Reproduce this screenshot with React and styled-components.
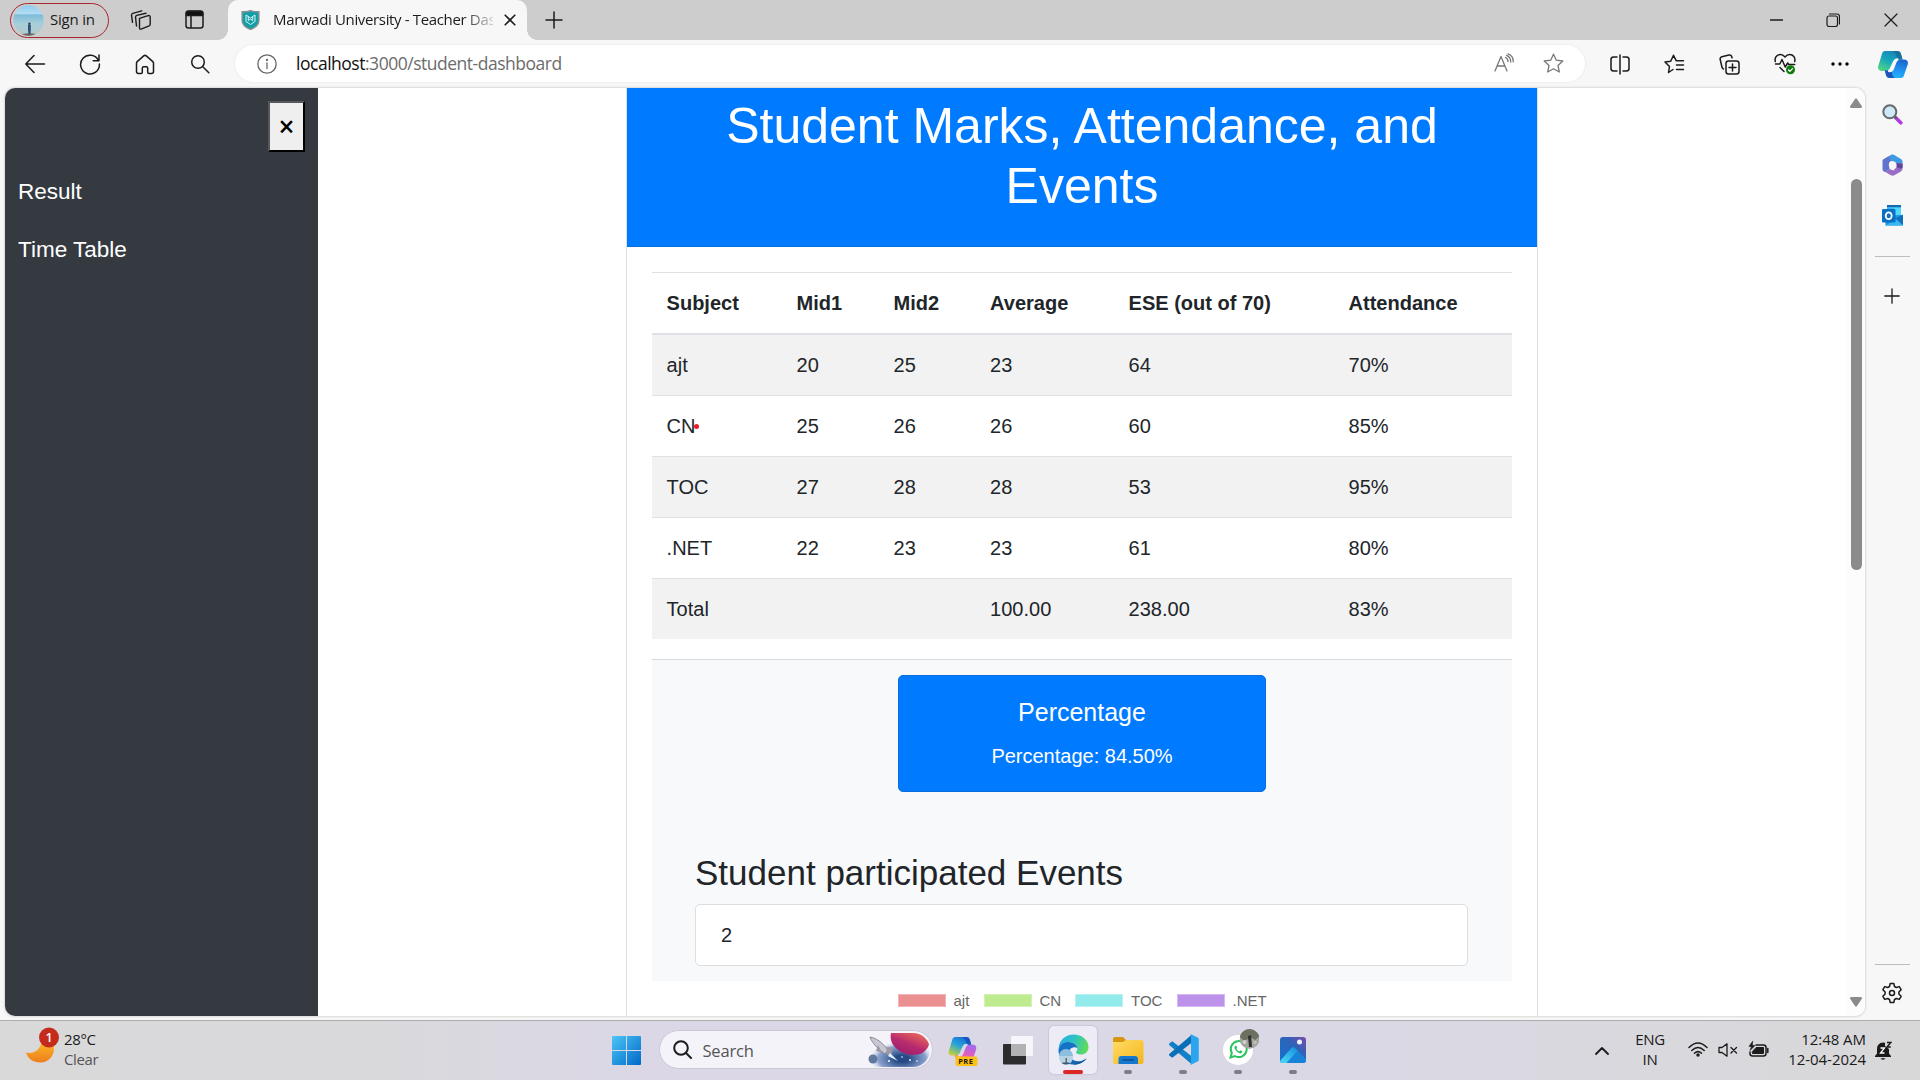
import React from "react";
import styled, { createGlobalStyle } from "styled-components";

const UI = `"Open Sans", "Noto Sans", sans-serif`;
const ARIAL = `"Liberation Sans", Arial, sans-serif`;

const Global = createGlobalStyle`
  *, *::before, *::after { box-sizing: border-box; }
  html, body { margin: 0; padding: 0; background: #f7f7f7; overflow: hidden; }
  h1, h2, h5, p { margin: 0; font-weight: 400; }
`;

const Desktop = styled.div`
  width: 1920px;
  height: 1080px;
  display: flex;
  flex-direction: column;
  background: #f7f7f7;
  font-family: ${UI};
  color: #1b1b1b;
  overflow: hidden;
  svg { display: block; flex: none; }
`;

/* ---------- Title bar ---------- */
const TitleBar = styled.div`
  height: 40px;
  flex: none;
  display: flex;
  background: #cdcdcd;
`;
const Profile = styled.div`
  width: 99px;
  height: 35px;
  margin: 3px 0 0 10px;
  padding-left: 2px;
  display: flex;
  align-items: center;
  gap: 6px;
  border: 1.5px solid #a8262f;
  border-radius: 18px;
  font-size: 15px;
  letter-spacing: -0.2px;
  white-space: nowrap;
`;
const ProfileName = styled.span`
  padding-bottom: 3px;
`;
const Slot = styled.div`
  width: ${(p) => p.$w || 55}px;
  height: 100%;
  flex: none;
  display: flex;
  align-items: center;
  justify-content: center;
`;
const TitleSlots = styled.div`
  display: flex;
  width: 108px;
  padding-left: 5px;
  height: 39px;
`;
const Tab = styled.div`
  width: 299px;
  height: 40px;
  margin-left: 11px;
  padding: 0 13px 0 13px;
  display: flex;
  align-items: center;
  position: relative;
  background: #f7f7f7;
  border-radius: 10px 10px 0 0;
  &::before, &::after {
    content: "";
    position: absolute;
    bottom: 0;
    width: 10px;
    height: 10px;
  }
  &::before { left: -10px; background: radial-gradient(circle at 0 0, transparent 9.5px, #f7f7f7 10px); }
  &::after { right: -10px; background: radial-gradient(circle at 100% 0, transparent 9.5px, #f7f7f7 10px); }
`;
const TabTitle = styled.div`
  width: 220px;
  margin: 0 11px 2px 13px;
  white-space: nowrap;
  font-size: 15px;
  letter-spacing: -0.35px;
  mask-image: linear-gradient(90deg, #000 190px, transparent 226px);
`;
const WindowButtons = styled.div`
  margin-left: auto;
  display: flex;
  height: 39px;
`;

/* ---------- Address row ---------- */
const Toolbar = styled.div`
  height: 48px;
  flex: none;
  display: flex;
  padding-left: 7.5px;
`;
const AddressBar = styled.div`
  width: 1350px;
  height: 37px;
  margin: 5px 7px 0 7.5px;
  padding: 0 21px 0 22px;
  display: flex;
  align-items: center;
  border-radius: 19px;
  background: #fff;
  box-shadow: 0 0 3px rgba(0, 0, 0, 0.08);
`;
const Url = styled.div`
  flex: 1;
  margin-left: 19px;
  padding-bottom: 1px;
  font-size: 17.5px;
  letter-spacing: -0.48px;
  color: #6c6c6c;
  b { font-weight: 400; color: #111; }
`;
const AddressTools = styled.div`
  display: flex;
  gap: 29px;
`;

/* ---------- Page area ---------- */
const Body = styled.div`
  height: 932px;
  flex: none;
  display: flex;
  padding-left: 5px;
`;
const Viewport = styled.div`
  width: 1860px;
  height: 928px;
  display: flex;
  background: #fff;
  border-radius: 10px;
  overflow: hidden;
  box-shadow: 0 0 2px 1px rgba(0, 0, 0, 0.12);
  font-family: ${ARIAL};
  color: #212529;
`;
const SideMenu = styled.div`
  width: 313px;
  background: #343a40;
  color: #fff;
  padding: 13px 13px 0;
  display: flex;
  flex-direction: column;
`;
const CloseButton = styled.button`
  align-self: flex-end;
  width: 37px;
  height: 51px;
  padding: 0 0 2px;
  border: 2px solid;
  border-color: #55585c #000 #000 #55585c;
  background: #efefef;
  color: #000;
  font: 600 28px/1 ${UI};
`;
const MenuLink = styled.div`
  height: 58px;
  display: flex;
  align-items: center;
  font-size: 22.5px;
`;
const Menu = styled.div`
  padding-top: 11px;
`;
const PageMain = styled.div`
  flex: 1;
  padding-left: 308px;
`;
const Card = styled.div`
  width: 912px;
  height: 940px;
  border: 1px solid #dfdfdf;
  border-top: 0;
`;
const CardHeader = styled.div`
  height: 159px;
  padding-top: 8px;
  background: #007bff;
  border-bottom: 1px solid #066fe0;
  color: #fff;
  text-align: center;
`;
const CardTitle = styled.h1`
  padding: 0 60px;
  font-size: 50px;
  line-height: 60px;
`;
const CardBody = styled.div`
  padding: 25px 25px 0;
`;
const Table = styled.div`
  height: 387px;
`;
const Row = styled.div`
  display: grid;
  grid-template-columns: 130px 97px 96.5px 138.5px 220px 178px;
  height: ${(p) => (p.$head ? 63 : 61)}px;
  border-top: 1px solid #dee2e6;
  ${(p) => p.$head && `border-bottom: 2px solid #dee2e6; font-weight: 700;`}
  ${(p) => p.$first && `border-top: 0; height: 60px;`}
  background: ${(p) => (p.$striped ? "#f2f2f2" : "#fff")};
  line-height: 30px;
  font-size: 20px;
`;
const Cell = styled.div`
  padding: 15px 0 0 14.6px;
  position: relative;
`;
const Pointer = styled.i`
  position: absolute;
  left: 42px;
  top: 28px;
  width: 5px;
  height: 5px;
  border-radius: 50%;
  background: #ec1c24;
`;
const Summary = styled.div`
  height: 322px;
  padding: 15px 43px 0;
  background: #f8f9fa;
  border-top: 1px solid #d6d8db;
`;
const PercentCard = styled.div`
  width: 368px;
  height: 117px;
  margin: 0 auto;
  padding-top: 21px;
  background: #007bff;
  border: 1px solid #0a6fdc;
  border-radius: 5px;
  color: #fff;
  text-align: center;
`;
const PercentTitle = styled.h5`
  font-size: 25px;
  line-height: 30px;
`;
const PercentText = styled.p`
  margin-top: 14px;
  font-size: 20px;
  line-height: 30px;
`;
const EventsTitle = styled.h2`
  margin-top: 60px;
  font-size: 35px;
  line-height: 42px;
`;
const EventsBox = styled.div`
  width: 773px;
  height: 62px;
  margin-top: 10px;
  padding: 15px 25px;
  background: #fff;
  border: 1px solid #dcdee0;
  border-radius: 5px;
  font-size: 20px;
  line-height: 30px;
`;
const Legend = styled.div`
  display: flex;
  padding: 12px 0 0 245.5px;
`;
const LegendItem = styled.div`
  width: ${(p) => p.$w}px;
  display: flex;
  align-items: center;
  gap: 8px;
  font-size: 15px;
  line-height: 15px;
  color: #666;
`;
const Swatch = styled.i`
  width: 48px;
  height: 13px;
  background: ${(p) => p.$c};
  border: 1px solid ${(p) => p.$b};
`;
const Scrollbar = styled.div`
  width: 19px;
  padding: 10px 3.5px 9px 0;
  display: flex;
  flex-direction: column;
  align-items: flex-end;
  background: #fcfcfc;
`;
const Thumb = styled.div`
  width: 11px;
  height: 391px;
  margin: 71px 0 auto;
  border-radius: 6px;
  background: #8b8b8b;
`;
const EdgeSidebar = styled.div`
  width: 54px;
  display: flex;
  flex-direction: column;
  align-items: center;
`;
const SideSlot = styled.div`
  height: ${(p) => p.$h || 51}px;
  display: flex;
  align-items: center;
`;
const Divider = styled.div`
  width: 35px;
  height: 1px;
  background: #bdbdbd;
  margin: ${(p) => p.$m};
`;

/* ---------- Taskbar ---------- */
const Taskbar = styled.div`
  height: 60px;
  flex: none;
  display: flex;
  border-top: 1px solid #adadb0;
  background: linear-gradient(90deg, #d9d9da 0, #d9d9dc 20%, #dbd7e6 34%, #dbd8e6 68%, #d9d8de 84%, #d8d8d9 100%);
`;
const Weather = styled.div`
  width: 598.5px;
  display: flex;
  padding-left: 24px;
`;
const Lines = styled.div`
  width: ${(p) => p.$w || "auto"};
  padding-top: 8px;
  text-align: ${(p) => p.$a || "left"};
  font-size: 15px;
  line-height: 20px;
  letter-spacing: ${(p) => p.$ls || -0.35}px;
  white-space: nowrap;
  span { color: #555; }
`;
const SearchBox = styled.div`
  width: 274px;
  height: 39px;
  margin: 9px 3px 0 5px;
  padding: 0 2px 0 13px;
  display: flex;
  align-items: center;
  background: #f4f3fa;
  border: 1px solid #cbc8d6;
  border-radius: 20px;
  font-size: 16.5px;
  letter-spacing: -0.2px;
  color: #555;
`;
const SearchLabel = styled.span`
  flex: 1;
  margin-left: 11px;
  padding-top: 1px;
`;
const AppSlot = styled.div`
  width: 55px;
  display: flex;
  flex-direction: column;
  align-items: center;
`;
const AppTile = styled.div`
  width: 48px;
  height: 48px;
  margin-top: 5px;
  display: flex;
  flex-direction: column;
  align-items: center;
  border-radius: 5px;
  ${(p) => p.$active && `background: #edebf5; box-shadow: 0 0 1px 1px rgba(120,110,150,.15);`}
`;
const AppIcon = styled.div`
  margin-top: ${(p) => p.$top}px;
  height: 26px;
`;
const Mark = styled.i`
  width: ${(p) => (p.$active ? 20 : 8)}px;
  height: 4px;
  margin-top: auto;
  border-radius: 2px;
  background: ${(p) => (p.$active ? "#dc2626" : "#7f7c88")};
`;
const Tray = styled.div`
  margin-left: auto;
  display: flex;
  padding-right: 20px;
`;
const TrayIcons = styled.div`
  display: flex;
  align-items: center;
  gap: 10px;
  width: 81px;
  margin-left: 4px;
  padding-bottom: 2px;
`;

const Line = ({ w = 22, h = w, vb, sw = 1.5, c = "#1b1b1b", children }) => (
  <svg width={w} height={h} viewBox={vb || `0 0 ${w} ${h}`} fill="none" stroke={c} strokeWidth={sw} strokeLinecap="round" strokeLinejoin="round">
    {children}
  </svg>
);

const Avatar = () => (
  <svg width="31" height="31" viewBox="0 0 31 31">
    <defs>
      <linearGradient id="sky" x1="0" y1="0" x2="0" y2="1">
        <stop offset="0" stopColor="#8ccbf0" /><stop offset=".28" stopColor="#b3dcf2" />
        <stop offset=".32" stopColor="#7fbbd9" /><stop offset=".6" stopColor="#a6cfdb" /><stop offset="1" stopColor="#b9c9c5" />
      </linearGradient>
      <clipPath id="avc"><circle cx="15.5" cy="15.5" r="15.2" /></clipPath>
    </defs>
    <g clipPath="url(#avc)">
      <rect width="31" height="31" fill="url(#sky)" />
      <path d="M5 31l4-2 7-.8 8 .8 3 2z" fill="#6b655e" />
      <path d="M15 20h2.800v4l-.3 5h-2.100l-.4-5z" fill="#2f4f7c" /><circle cx="16.400" cy="18.700" r="1.200" fill="#3b3a3f" />
    </g>
  </svg>
);

const Shield = () => (
  <svg width="19" height="20" viewBox="0 0 19 20">
    <path d="M9.5.6c2 1 5.400 1.300 8.400 1.100v8.800c0 4.200-3.600 7.100-8.400 9-4.800-1.900-8.400-4.800-8.400-9V1.700c3 .2 6.400-.1 8.400-1.100z" fill="#109fa6" stroke="#8b8f91" strokeWidth="1.4" />
    <path d="M5 5v6.500l4.500 3 4.500-3V5L9.500 8zM7.300 6.500v4M11.700 6.500v4M7.300 10.500l2.200-1.300 2.200 1.300" fill="none" stroke="#d9f2f2" strokeWidth="1" />
  </svg>
);

const CopilotMark = ({ w = 30, h = 27, taskbar }) => (
  <svg width={w} height={h} viewBox="0 0 30 27">
    <defs>
      <linearGradient id={taskbar ? "ca2" : "ca"} x1=".8" y1="0" x2=".2" y2="1">
        <stop offset="0" stopColor={taskbar ? "#1768d6" : "#1b7fb5"} /><stop offset=".5" stopColor={taskbar ? "#26a5d8" : "#14a5bd"} /><stop offset="1" stopColor={taskbar ? "#c5d03a" : "#4fd683"} />
      </linearGradient>
      <linearGradient id={taskbar ? "cb2" : "cb"} x1=".6" y1="0" x2=".3" y2="1">
        <stop offset="0" stopColor={taskbar ? "#a667ee" : "#1b66cf"} /><stop offset=".6" stopColor={taskbar ? "#e65eb8" : "#2099f4"} /><stop offset="1" stopColor={taskbar ? "#fa8b6a" : "#24b7f8"} />
      </linearGradient>
    </defs>
    <path d="M7 0h12c2.400 0 3.500 1.300 4 3l1.500 5.500h-5.500c-2 0-3 1.400-3.500 3l-2.200 6c-.6 1.700-1.500 2.500-3.300 2.500H4c-3 0-4.600-2-3.700-5L4 2.700C4.500 1 5.400 0 7 0z" fill={`url(#${taskbar ? "ca2" : "ca"})`} />
    <path d="M23 27H12c-2.400 0-3.500-1.200-4-3l-1.200-4.500h4.400c2 0 2.800-1 3.300-2.500l2.300-6c.6-1.700 1.500-2.500 3.300-2.500H26c3 0 4.600 2 3.700 5L26 24.300c-.5 1.700-1.400 2.700-3 2.700z" fill={`url(#${taskbar ? "cb2" : "cb"})`} />
    <path d="M14.500.1H19c2.400 0 3.500 1.300 4 3l1.500 5.400H20c-2-5-3-7.500-5.500-8.400z" fill={taskbar ? "#174fb8" : "#146a94"} opacity=".75" />
    <path d="M6.800 19.600h4.400c1 0 1.800-.3 2.300-.9.300 4 1.200 7.300 3.500 8.300h-5c-2.400 0-3.500-1.200-4-3z" fill={taskbar ? "#f4b42b" : "#1b3fa8"} opacity=".8" />
    <path d="M16.300 10.500q1-2 3-2l-1.600 1.500-3.300 8.500q-.8 1.600-3.200 1.500l1.500-1.500z" fill={taskbar ? "#dbd8e6" : "#f7f7f7"} stroke={taskbar ? "#dbd8e6" : "#f7f7f7"} strokeWidth="2.500" strokeLinejoin="round" />
  </svg>
);

const SearchColor = () => (
  <svg width="21" height="21" viewBox="0 0 21 21">
    <path d="M14 14l4.800 4.800" stroke="#b13ae0" strokeWidth="3.600" strokeLinecap="round" />
    <path d="M12 12l2.500 2.500" stroke="#55585d" strokeWidth="2" />
    <circle cx="7.800" cy="7.800" r="6.500" fill="#cfe8f8" stroke="#65696e" strokeWidth="2" />
  </svg>
);
const M365 = () => (
  <svg width="21" height="22" viewBox="0 0 21 22">
    <path d="M10 .5c-3 1.500-6 3-8.300 4.600C.8 5.800.5 6.500.5 7.600v7.500c0 2 1.600 3.400 3.500 2.500L7.500 15V8L14 4.300z" fill="#5f74cf" />
    <path d="M9.500.7c1-.4 1.900-.2 2.800.3l6.600 3.900c1 .6 1.600 1.500 1.600 2.700v5.600L14 9.500 8.500 6.500c-.8-2-1-5 1-5.800z" fill="#3d9be3" />
    <path d="M20.500 9v5.800c0 1.200-.6 2-1.600 2.600l-6.600 3.900c-1 .6-2.400.6-3.400 0L3 17.800l4.500-2.900 4 1.600 3-3.500V9z" fill="#9a6dc4" />
    <path d="M20.500 10v3.800c-2 1.600-4.500.5-6-1.300V9z" fill="#5e4797" />
    <circle cx="10.600" cy="11" r="3.800" fill="#f7f7f7" />
  </svg>
);
const Outlook = () => (
  <svg width="21" height="21" viewBox="0 0 21 21">
    <path d="M5 0h14v12H5z" fill="#35b8f1" /><path d="M5 0h14v2H5z" fill="#1769aa" /><path d="M12 3h7v7h-7z" fill="#50d9ff" />
    <path d="M3.500 11L21 10v10.500H3.500z" fill="#1b93dd" /><path d="M21 9.500V20l-8-6z" fill="#0f6fbb" /><path d="M3.500 20.500L14 14l7 6.500z" fill="#39b7f0" />
    <rect y="4" width="13.500" height="13.500" rx="1.300" fill="#0b6fc6" />
    <ellipse cx="6.700" cy="10.700" rx="3" ry="3.400" fill="none" stroke="#fff" strokeWidth="1.800" />
  </svg>
);

const WinLogo = () => (
  <svg width="29" height="29" viewBox="0 0 29 29">
    <defs><linearGradient id="wl" x1="0" y1="0" x2="1" y2="1"><stop offset="0" stopColor="#4cc6f7" /><stop offset="1" stopColor="#0068c8" /></linearGradient></defs>
    <path d="M1 0h13v14H0V1q0-1 1-1zM15 0h13q1 0 1 1v13H15zM0 15h14v14H1q-1 0-1-1zM15 15h14v13q0 1-1 1H15z" fill="url(#wl)" />
  </svg>
);
const SearchArt = () => (
  <svg width="63" height="34" viewBox="0 0 63 34">
    <defs>
      <radialGradient id="sp" cx=".5" cy=".55" r=".5"><stop offset=".2" stopColor="#254a86" /><stop offset=".7" stopColor="#6d8bc0" stopOpacity=".8" /><stop offset="1" stopColor="#f4f3fa" stopOpacity="0" /></radialGradient>
      <linearGradient id="pl" x1=".1" y1="1" x2=".8" y2="0"><stop offset="0" stopColor="#8f1f6d" /><stop offset=".5" stopColor="#b82a6e" /><stop offset="1" stopColor="#ee6b57" /></linearGradient>
      <clipPath id="ac"><path d="M0 0h46a17 17 0 010 34H0z" /></clipPath>
    </defs>
    <g clipPath="url(#ac)">
      <ellipse cx="35" cy="24" rx="34" ry="18" fill="url(#sp)" />
      <path d="M24 0h36c5 8 2 19-9 21.500C37 24 21 14 24 0z" fill="url(#pl)" />
      <circle cx="6" cy="26" r="4.500" fill="#60799c" />
      <path d="M3 4c6 1 12 5 18 13l-3 4C11 16 5 10 3 4z" fill="#c9c8d2" stroke="#777789" strokeWidth=".8" />
      <path d="M11 12l-2 6 6 1.500zM20 14l6 1-2 8-5-2z" fill="#9b97a6" />
      <path d="M23 20l8 8-10-5z" fill="#dff2ff" />
      <g fill="#fff"><circle cx="35" cy="24" r=".8" /><circle cx="43" cy="27" r=".9" /><circle cx="50" cy="28" r=".8" /><circle cx="22" cy="28" r="1" /></g>
    </g>
  </svg>
);
const PreText = styled.text`
  font: 700 7.5px ${UI};
  letter-spacing: 0.4px;
`;
const CopilotPre = () => (
  <svg width="30" height="30" viewBox="0 0 30 30">
    <CopilotMark w={29} h={25} taskbar />
    <rect x="7.500" y="19.500" width="22" height="9.500" rx="2" fill="#fbc116" />
    <PreText x="10.200" y="27" fill="#1d1a10">PRE</PreText>
  </svg>
);
const TaskView = () => (
  <svg width="30" height="29" viewBox="0 0 30 29">
    <rect y="8" width="23" height="20.500" rx="1" fill="#2c2c2e" />
    <rect x="8" width="22" height="20" rx="1" fill="#f6f5f9" />
    <path d="M8 8h15v12H8z" fill="#b2b2b4" />
  </svg>
);
const Edge = () => (
  <svg width="31" height="31" viewBox="0 0 31 31">
    <defs>
      <linearGradient id="e1" x1="0" y1=".3" x2="1" y2=".5"><stop offset="0" stopColor="#2baee4" /><stop offset=".5" stopColor="#2cc3c3" /><stop offset="1" stopColor="#62dc55" /></linearGradient>
      <linearGradient id="e2" x1="0" y1="0" x2="1" y2="1"><stop offset="0" stopColor="#1e8fdc" /><stop offset="1" stopColor="#114a8b" /></linearGradient>
    </defs>
    <path d="M.6 14C1.500 6 7.500.5 15.500.5 24 .5 30.500 6 30.500 13c0 5-3.600 7.500-7.700 7.500-3 0-4.800-1.200-4.800-2.200 0-.8 1.400-1.400 1.400-3.600C19.400 11 15.500 8 11 8 6.500 8 2.500 10.500.6 14z" fill="url(#e1)" />
    <path d="M.5 15.500C1.500 10 6 7.900 10.500 7.900c5 0 8.900 3 8.900 6.600-1.400-2.200-6.400-1.800-7.900 2-2 5.500 3.500 11.500 9.500 11 3.500-.3 5.500-2 7.500-3.300C26 28 21 30.800 15.500 30.500 6 30.500 0 23 .5 15.500z" fill="#1473c5" />
    <path d="M11.500 16.500c-2.500 6.500 4 11.500 10 11 3.500-.3 5.500-2 7.400-3.200C26 28 21 31 15.500 30.500 9 28.500 7.500 20 11.500 16.500z" fill="url(#e2)" />
    <circle cx="8" cy="23.500" r="7" fill="#b5d3e2" /><path d="M1 22a7 7 0 0114 0z" fill="#8dbede" />
    <path d="M7.600 24h1.200v4.500H7.600zM3.500 29q4.500-1.500 9 0-4.500 3-9 0" fill="#3f5568" />
  </svg>
);
const Folder = () => (
  <svg width="31" height="28" viewBox="0 0 31 28">
    <defs><linearGradient id="fo" x1="0" y1="0" x2="1" y2="1"><stop offset="0" stopColor="#ffdc65" /><stop offset="1" stopColor="#f5b51c" /></linearGradient></defs>
    <path d="M0 2q0-2 2-2h8l3 3-2 4H0z" fill="#d7960f" />
    <path d="M0 5h10l3-2h15q2.500 0 2.500 2v20q0 2-2 2H2q-2 0-2-2z" fill="url(#fo)" />
    <path d="M5.500 27v-5q0-3 3-3H22q3 0 3 3v5z" fill="#1478cf" /><rect x="9.500" y="22" width="11.500" height="1.800" rx=".9" fill="#0b5394" />
  </svg>
);
const VSCode = () => (
  <svg width="31" height="31" viewBox="0 0 31 31">
    <path d="M1.500 9.200l2-1.500q.8-.5 1.500 0L24 22.500v8L1.200 11q-.6-1 .3-1.800z" fill="#1080c8" />
    <path d="M1.500 21.800l2 1.500q.8.500 1.500 0L24 8.500v-8L1.200 20q-.6 1 .3 1.800z" fill="#0a6fb7" />
    <path d="M22 .8q.7-.6 1.600-.2L30 3.700q.8.400.8 1.300v21q0 .9-.8 1.300l-6.400 3.100q-.9.400-1.600-.2 1 .2 1-1.500V2.300Q23 .6 22 .8z" fill="#2aa5ee" />
  </svg>
);
const WhatsApp = () => (
  <svg width="42" height="40" viewBox="-4 0 42 40">
    <defs><clipPath id="wac"><circle cx="28.500" cy="11" r="10" /></clipPath></defs>
    <circle cx="17" cy="22" r="15" fill="#fff" />
    <path d="M9.500 29.500l1.300-4.500a8 8 0 113 3z" fill="none" stroke="#29c35f" strokeWidth="2" />
    <path d="M14.300 17.800c-1.200.8-1 2.600.2 4.300 1.600 2.400 4.300 4 6 3 .8-.5 1-1.400.8-1.800l-2-1-1 1.100c-1.200-.4-2.400-1.500-2.900-2.700l.8-1-.9-2z" fill="#29c35f" />
    <g clipPath="url(#wac)">
      <circle cx="28.500" cy="11" r="10" fill="#a3a59c" />
      <path d="M19 1h20v7l-5 4-3-2-4 1-4 2-4-4z" fill="#6b7060" /><path d="M27 8l3-1 1 12h-3z" fill="#2f3130" />
      <circle cx="23.500" cy="14" r="2" fill="#cfd0cb" /><circle cx="34" cy="14.500" r="1.800" fill="#bfc0ba" />
    </g>
  </svg>
);
const Photos = () => (
  <svg width="26" height="26" viewBox="0 0 26 26">
    <defs>
      <linearGradient id="ph" x1="0" y1="1" x2="1" y2="0"><stop offset="0" stopColor="#1371cf" /><stop offset=".6" stopColor="#2e63b8" /><stop offset="1" stopColor="#7d4ca8" /></linearGradient>
      <linearGradient id="pm" x1="0" y1="1" x2=".7" y2="0"><stop offset="0" stopColor="#4fdcf5" /><stop offset="1" stopColor="#1c98e0" /></linearGradient>
      <clipPath id="pc"><rect width="26" height="26" rx="3" /></clipPath>
    </defs>
    <g clipPath="url(#pc)">
      <rect width="26" height="26" fill="url(#ph)" />
      <path d="M0 23.500L11.500 11q1.700-1.700 3.400 0L26 22v4H0z" fill="#1784da" />
      <path d="M0 24L11.500 11q1.700-1.700 3.400 0l2.600 2.700L6.500 26H0z" fill="url(#pm)" />
      <circle cx="19.500" cy="5" r="2.500" fill="#f1f3fb" />
    </g>
  </svg>
);
const BadgeText = styled.text`
  font: 600 12.5px ${UI};
  fill: #fff;
`;
const Moon = () => (
  <svg width="40" height="58" viewBox="0 0 40 58">
    <defs><linearGradient id="mo" x1="0" y1="0" x2="0" y2="1"><stop offset="0" stopColor="#fbc02d" /><stop offset="1" stopColor="#ef7d1a" /></linearGradient></defs>
    <path d="M2 31.500c8 2 15-3 16-13 9 0 12 3 12 9 0 8-6 14-13.500 14C9 41.500 4 38 2 31.500z" fill="url(#mo)" />
    <circle cx="25" cy="16.500" r="10" fill="#c42b1c" />
    <BadgeText x="21.500" y="21">1</BadgeText>
  </svg>
);

const headings = ["Subject", "Mid1", "Mid2", "Average", "ESE (out of 70)", "Attendance"];
const rows = [
  ["ajt", "20", "25", "23", "64", "70%"],
  ["CN", "25", "26", "26", "60", "85%"],
  ["TOC", "27", "28", "28", "53", "95%"],
  [".NET", "22", "23", "23", "61", "80%"],
  ["Total", "", "", "100.00", "238.00", "83%"],
];

const apps = [
  { icon: <CopilotPre />, top: 11 },
  { icon: <TaskView />, top: 10 },
  { icon: <Edge />, top: 8, active: true },
  { icon: <Folder />, top: 11, running: true },
  { icon: <VSCode />, top: 8, running: true },
  { icon: <WhatsApp />, top: 2, running: true },
  { icon: <Photos />, top: 11, running: true },
];

export default function App() {
  return (
    <>
      <Global />
      <Desktop>
        <TitleBar>
          <Profile><Avatar /><ProfileName>Sign in</ProfileName></Profile>
          <TitleSlots>
            <Slot $w={54}>
              <Line w={22} sw={1.4}>
                <path d="M9.500 9.300l8.500-2.600q2.200-.6 2.200 1.500v7q0 1.100-1.100 1.600l-7.400 3.100q-2.200.9-2.200-1.200z" />
                <path d="M6.500 17l-1-8.800q0-1.400 1.200-1.800L16 4.200M2.500 13.300L1.500 6.200q0-1.400 1.200-1.800l9-2.600" />
              </Line>
            </Slot>
            <Slot $w={52}>
              <Line w={19}><path d="M3.500 1h12Q18 1 18 3.500v12q0 2.500-2.500 2.500h-12Q1 18 1 15.500v-12Q1 1 3.500 1zM6 6v12" /><path d="M1.500 3.500Q1.500 1.500 3.500 1.500h12q2 0 2 2V5.500h-16z" fill="#111" /></Line>
            </Slot>
          </TitleSlots>
          <Tab>
            <Shield />
            <TabTitle>Marwadi University - Teacher Das</TabTitle>
            <Line w={12} sw={1.6}><path d="M1.200 1.200l9.600 9.600M10.800 1.200l-9.600 9.600" /></Line>
          </Tab>
          <Slot $w={54}><Line w={18}><path d="M9 1v16M1 9h16" /></Line></Slot>
          <WindowButtons>
            <Slot $w={57}><Line w={13} h={2} sw={1.3}><path d="M0 1h13" /></Line></Slot>
            <Slot $w={57.5}><Line w={14} sw={1.2}><rect x="1" y="3" width="10.500" height="10.500" rx="2" /><path d="M3.500 1H11q2.500 0 2.500 2.500V11" /></Line></Slot>
            <Slot $w={58}><Line w={14} sw={1.2}><path d="M1 1l12 12M13 1L1 13" /></Line></Slot>
          </WindowButtons>
        </TitleBar>

        <Toolbar>
          <Slot><Line w={22}><path d="M20.500 11H2M10 2.500L1.800 11l8.200 8.500" /></Line></Slot>
          <Slot><Line w={22}><path d="M19.500 7.500A9.400 9.400 0 1020.400 11M20 2v5.800h-5.800" /></Line></Slot>
          <Slot><Line w={20} h={21}><path d="M1.500 9.200Q1.500 8.300 2.200 7.600L8.700 1.900q1.300-1.100 2.600 0l6.500 5.700q.7.700.7 1.600v8.300q0 2-2 2H14q-1.300 0-1.300-1.300v-4q0-1.400-1.300-1.400H8.600q-1.300 0-1.300 1.400v4q0 1.300-1.300 1.300H3.500q-2 0-2-2z" /></Line></Slot>
          <Slot><Line w={20}><circle cx="8" cy="8" r="6.300" /><path d="M12.800 12.800l6 6" /></Line></Slot>
          <AddressBar>
            <Line w={20} c="#666" sw={1.3}><circle cx="10" cy="10" r="9.200" /><path d="M10 9v5.500" /><circle cx="10" cy="6" r=".5" fill="#666" /></Line>
            <Url><b>localhost</b>:3000/student-dashboard</Url>
            <AddressTools>
              <Line w={20} c="#777" sw={1.3}><path d="M1 18L7 3.500 13 18M3 13h8M11.500 4.500q2.500 1.200 2.500 4M12.500 2.300q4.300 1.700 4.200 6.700M14 .8q5.500 2 5.200 8" /></Line>
              <Line w={21} c="#777" sw={1.3}><path d="M10.500 1.200l2.800 6 6.500.8-4.800 4.500 1.300 6.500-5.800-3.200-5.800 3.200L6 12.500 1.200 8l6.500-.8z" /></Line>
            </AddressTools>
          </AddressBar>
          <Slot><Line w={20} h={21}><path d="M10 1v19M7 3H3.500Q1 3 1 5.500v9Q1 17 3.500 17H7M13 3h3.500Q19 3 19 5.500v9q0 2.500-2.500 2.500H13" /></Line></Slot>
          <Slot><Line w={21} h={20}><path d="M9 15.500l-4.500 3 1-6L1 8l5.700-.8L9.500 1.300l2.800 5.500h7.200M12.500 11h7M12.500 15.500h7" /></Line></Slot>
          <Slot><Line w={21}><rect x="7" y="7" width="13" height="13" rx="2.500" /><path d="M13.500 10v7M10 13.500h7M4.500 15Q3.300 14.500 3 13.300L1.200 5.500q-.5-2.200 1.700-2.800l7-1.700q2-.5 2.700 1.300l.4 1.500" /></Line></Slot>
          <Slot>
            <Line w={22}><path d="M10 18.500L6 14.500M1.300 8.500C.3 4.500 3 1.500 6.300 1.500c2 0 3.500 1 4.700 2.500 1.200-1.500 2.700-2.500 4.700-2.500 3.300 0 6 3 5 7M1.500 11h4.300L8 6.500l3.200 7.500 2.500-4 1 1.500h6" /><circle cx="16.500" cy="16.800" r="4.500" fill="#107c10" stroke="none" /><path d="M14.500 17l1.400 1.400 2.600-2.800" stroke="#fff" strokeWidth="1.200" /></Line>
          </Slot>
          <Slot><svg width="18" height="4" viewBox="0 0 18 4"><circle cx="2" cy="2" r="1.700" /><circle cx="9" cy="2" r="1.700" /><circle cx="16" cy="2" r="1.700" /></svg></Slot>
          <Slot $w={51}><CopilotMark /></Slot>
        </Toolbar>

        <Body>
          <Viewport>
            <SideMenu>
              <CloseButton>×</CloseButton>
              <Menu>
                <MenuLink>Result</MenuLink>
                <MenuLink>Time Table</MenuLink>
              </Menu>
            </SideMenu>
            <PageMain>
              <Card>
                <CardHeader><CardTitle>Student Marks, Attendance, and Events</CardTitle></CardHeader>
                <CardBody>
                  <Table>
                    <Row $head>{headings.map((t) => <Cell key={t}>{t}</Cell>)}</Row>
                    {rows.map((r, i) => (
                      <Row key={r[0]} $striped={i % 2 === 0} $first={i === 0}>
                        {r.map((t, j) => <Cell key={j}>{t}{t === "CN" && <Pointer />}</Cell>)}
                      </Row>
                    ))}
                  </Table>
                  <Summary>
                    <PercentCard>
                      <PercentTitle>Percentage</PercentTitle>
                      <PercentText>Percentage: 84.50%</PercentText>
                    </PercentCard>
                    <EventsTitle>Student participated Events</EventsTitle>
                    <EventsBox>2</EventsBox>
                  </Summary>
                  <Legend>
                    <LegendItem $w={86}><Swatch $c="#eb9090" $b="#f5b5b8" />ajt</LegendItem>
                    <LegendItem $w={91.5}><Swatch $c="#bfeb90" $b="#d3f2b5" />CN</LegendItem>
                    <LegendItem $w={101.5}><Swatch $c="#92ebeb" $b="#b8f2f2" />TOC</LegendItem>
                    <LegendItem $w={100}><Swatch $c="#bd92eb" $b="#d6b8f5" />.NET</LegendItem>
                  </Legend>
                </CardBody>
              </Card>
            </PageMain>
            <Scrollbar>
              <svg width="12" height="10" viewBox="0 0 12 10"><path d="M5 1q1-1.500 2 0l4.700 7q.8 2-1 2H1.300Q-.5 10 .3 8z" fill="#8b8b8b" /></svg>
              <Thumb />
              <svg width="12" height="10" viewBox="0 0 12 10"><path d="M5 9q1 1.500 2 0l4.700-7q.8-2-1-2H1.300Q-.5 0 .3 2z" fill="#8b8b8b" /></svg>
            </Scrollbar>
          </Viewport>
          <EdgeSidebar>
            <SideSlot $h={52}><SearchColor /></SideSlot>
            <SideSlot $h={50}><M365 /></SideSlot>
            <SideSlot><Outlook /></SideSlot>
            <Divider $m="15px 0 0" />
            <SideSlot $h={78}><Line w={16} sw={1.300}><path d="M8 .8v14.400M.8 8h14.400" /></Line></SideSlot>
            <Divider $m="auto 0 0" />
            <SideSlot $h={55}>
              <Line w={22}><circle cx="11" cy="11" r="2.500" /><path d="M9.200 1.500h3.600l.7 3 1.800 1 3-.9 1.800 3.100L17.900 10v2l2.200 2.300-1.800 3.100-3-.9-1.800 1-.7 3H9.200l-.7-3-1.800-1-3 .9-1.800-3.100L4.100 12v-2L1.900 7.700l1.800-3.100 3 .9 1.800-1z" /></Line>
            </SideSlot>
          </EdgeSidebar>
        </Body>

        <Taskbar>
          <Weather>
            <Moon />
            <Lines>28°C<br /><span>Clear</span></Lines>
          </Weather>
          <Slot><WinLogo /></Slot>
          <SearchBox>
            <Line w={19} sw={2}><circle cx="8" cy="8" r="6.800" /><path d="M13 13l5 5" /></Line>
            <SearchLabel>Search</SearchLabel>
            <SearchArt />
          </SearchBox>
          {apps.map((a, i) => (
            <AppSlot key={i}>
              <AppTile $active={a.active}>
                <AppIcon $top={a.top}>{a.icon}</AppIcon>
                {(a.active || a.running) && <Mark $active={a.active} />}
              </AppTile>
            </AppSlot>
          ))}
          <Tray>
            <Slot $w={28}><Line w={14} h={8} sw={1.8}><path d="M1 7l6-6 6 6" /></Line></Slot>
            <Lines $w="68px" $a="center">ENG<br />IN</Lines>
            <TrayIcons>
              <Line w={20} h={15} sw={1.500}><path d="M1 5.500q9-9 18 0M3.800 8.500q6.200-6 12.400 0M6.500 11.200q3.500-3.200 7 0" /><circle cx="10" cy="13" r="1" fill="#1b1b1b" /></Line>
              <Line w={20} h={14} sw={1.300}><path d="M1 4.500h3l5-3.700v12.400l-5-3.700H1zM13 4.500l5.500 5.500M18.500 4.500L13 10" /></Line>
              <Line w={21} h={17} sw={1.500}>
                <path d="M8 4h7.500q2.500 0 2.500 2.500v6q0 2.500-2.500 2.500h-11Q2 15 2 12.500V11M19.800 7.500v4" />
                <path d="M8.500 6.500h7v6h-11l-.2-1.500z" fill="#1b1b1b" strokeWidth="1" />
                <path d="M4.500.5L1 5.500h2.500L2 9.500l5-5H4.500z" fill="#1b1b1b" strokeWidth=".6" />
              </Line>
            </TrayIcons>
            <Lines $w="97px" $a="right" $ls="-0.05">12:48 AM<br />12-04-2024</Lines>
            <Slot $w={34}>
              <svg width="18" height="20" viewBox="0 0 18 20">
                <path d="M1 16v-1l2-2.500V8q0-6 6-6.500l2 .3v3.200l4 3v4.500l2 2.500v1zM6.500 17.200h5q-2.500 3.300-5 0z" fill="#1b1b1b" />
                <path d="M6.500 7h4l-4 5h4" fill="none" stroke="#fff" strokeWidth="1.300" /><path d="M13 1.500h3.800L13 6h3.800" fill="none" stroke="#1b1b1b" strokeWidth="1.400" />
              </svg>
            </Slot>
          </Tray>
        </Taskbar>
      </Desktop>
    </>
  );
}
